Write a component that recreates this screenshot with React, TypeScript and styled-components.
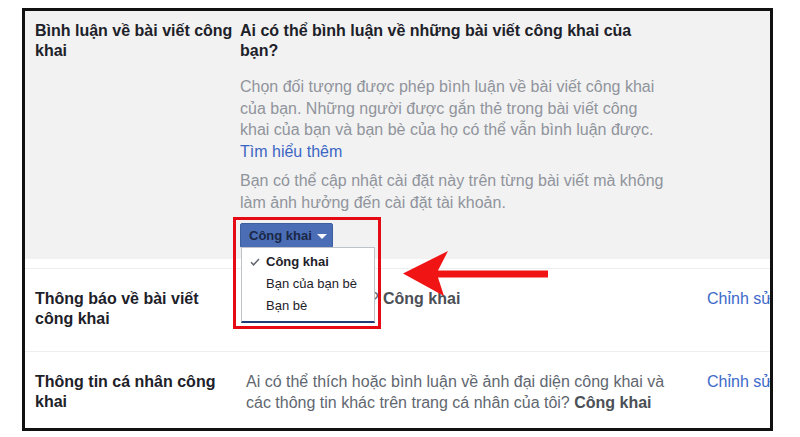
import styled, { createGlobalStyle } from "styled-components";

const GlobalStyle = createGlobalStyle`
  html, body {
    margin: 0;
    padding: 0;
    background: #ffffff;
  }
  body {
    font-family: "Liberation Sans", Arial, sans-serif;
    -webkit-font-smoothing: antialiased;
  }
`;

const Page = styled.div`
  width: 800px;
  height: 437px;
  padding: 8px 0 0 22px;
  box-sizing: border-box;
`;

const Frame = styled.div`
  position: relative;
  width: 751px;
  height: 423px;
  box-sizing: border-box;
  border: 3px solid #111111;
  overflow: hidden;
  background: #ffffff;
`;

const Section = styled.div<{ $shaded?: boolean; $gap: number }>`
  display: grid;
  grid-template-columns: 202px ${(p) => (p.$shaded ? "428px" : "430px")} auto;
  column-gap: ${(p) => p.$gap}px;
  align-items: start;
  background: ${(p) => (p.$shaded ? "#f2f2f2" : "transparent")};
  padding: ${(p) => (p.$shaded ? "10px 0 11px 10px" : "20px 0 22px 10px")};
  border-top: ${(p) => (p.$shaded ? "none" : "1px solid #eceef0")};
`;

const Rows = styled.div`
  margin-top: 9px;
  width: 900px;
`;

const Label = styled.div`
  font-size: 16px;
  line-height: 20px;
  font-weight: bold;
  color: #1d2129;
`;

const Content = styled.div``;

const Heading = styled.div`
  font-size: 16px;
  line-height: 20px;
  font-weight: bold;
  color: #1d2129;
`;

const Paragraph = styled.p<{ $space: number }>`
  margin: ${(p) => p.$space}px 0 0;
  font-size: 16px;
  line-height: 21.5px;
  color: #90949c;
`;

const Link = styled.a`
  color: #3b66c4;
  text-decoration: none;
  cursor: pointer;
`;

const Value = styled.div`
  font-size: 16px;
  line-height: 20.5px;
  color: #616770;

  b {
    color: #4b4f56;
  }
`;

const Edit = styled.a`
  font-size: 16px;
  line-height: 20.5px;
  color: #3c69c9;
  white-space: nowrap;
  padding-left: 22px;
`;

const Picker = styled.div`
  position: relative;
  display: inline-block;
  margin-top: 10px;
`;

const PickerButton = styled.button`
  display: flex;
  align-items: center;
  gap: 5px;
  height: 25px;
  padding: 0 5px 0 8px;
  border: 1px solid #3e5f9f;
  border-radius: 2px;
  background: #4a6db5;
  color: #1a2746;
  font-family: "Liberation Sans", Arial, sans-serif;
  font-size: 13px;
  font-weight: bold;
`;

const Caret = styled.span`
  width: 0;
  height: 0;
  border-left: 5px solid transparent;
  border-right: 5px solid transparent;
  border-top: 5px solid #f4f6fb;
  margin-top: 1px;
`;

const Menu = styled.ul`
  position: absolute;
  left: 1px;
  top: 24px;
  width: 134px;
  height: 76px;
  box-sizing: border-box;
  margin: 0;
  padding: 3px 0 0;
  list-style: none;
  background: #ffffff;
  border: 1px solid #bec3c9;
  border-bottom: 2px solid #1d3c78;
`;

const MenuItem = styled.li<{ $selected?: boolean }>`
  position: relative;
  padding-left: 24px;
  font-size: 13px;
  line-height: 22px;
  color: #1d2129;
  font-weight: ${(p) => (p.$selected ? "bold" : "normal")};
  white-space: nowrap;
`;

const Check = styled.svg`
  position: absolute;
  left: 8px;
  top: 7px;
`;

const Highlight = styled.div`
  position: absolute;
  left: -7px;
  top: -6px;
  width: 148px;
  height: 112px;
  box-sizing: border-box;
  border: 3px solid #e60a14;
  pointer-events: none;
`;

const Arrow = styled.svg`
  position: absolute;
  left: 378px;
  top: 239px;
`;

export default function App() {
  return (
    <>
      <GlobalStyle />
      <Page>
        <Frame>
          <Section $shaded $gap={3}>
            <Label>Bình luận về bài viết công khai</Label>
            <Content>
              <Heading>Ai có thể bình luận về những bài viết công khai của bạn?</Heading>
              <Paragraph $space={15}>
                Chọn đối tượng được phép bình luận về bài viết công khai của bạn. Những người được gắn
                thẻ trong bài viết công khai của bạn và bạn bè của họ có thể vẫn bình luận được.{" "}
                <Link>Tìm hiểu thêm</Link>
              </Paragraph>
              <Paragraph $space={8}>
                Bạn có thể cập nhật cài đặt này trên từng bài viết mà không làm ảnh hưởng đến cài đặt
                tài khoản.
              </Paragraph>
              <Picker>
                <PickerButton>
                  Công khai
                  <Caret />
                </PickerButton>
                <Menu>
                  <MenuItem $selected>
                    <Check width="10" height="8" viewBox="0 0 10 8">
                      <path d="M1 4.2 L3.6 6.8 L9 1" fill="none" stroke="#606770" strokeWidth="1.5" />
                    </Check>
                    Công khai
                  </MenuItem>
                  <MenuItem>Bạn của bạn bè</MenuItem>
                  <MenuItem>Bạn bè</MenuItem>
                </Menu>
                <Highlight />
              </Picker>
            </Content>
          </Section>

          <Rows>
            <Section $gap={9}>
              <Label>Thông báo về bài viết công khai</Label>
              <Value>
                Ai có thể theo dõi? <b>Công khai</b>
              </Value>
              <Edit>Chỉnh sửa</Edit>
            </Section>
            <Section $gap={9}>
              <Label>Thông tin cá nhân công khai</Label>
              <Value>
                Ai có thể thích hoặc bình luận về ảnh đại diện công khai và các thông tin khác trên
                trang cá nhân của tôi? <b>Công khai</b>
              </Value>
              <Edit>Chỉnh sửa</Edit>
            </Section>
          </Rows>

          <Arrow width="146" height="48" viewBox="0 0 146 48">
            <polygon
              points="0,23.5 45,1 35,20.5 145,20.5 145,27.5 35,27.5 41,46"
              fill="#f01414"
            />
          </Arrow>
        </Frame>
      </Page>
    </>
  );
}
